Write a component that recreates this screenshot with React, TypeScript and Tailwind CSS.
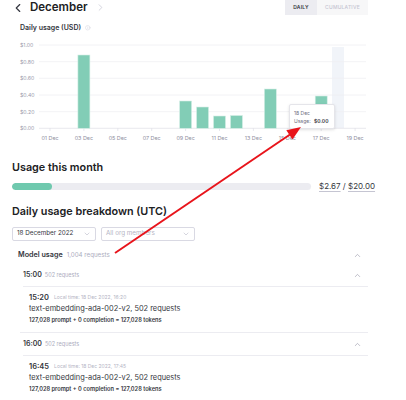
import React from "react";
import { ChevronLeft, ChevronRight, ChevronDown, ChevronUp, Info } from "lucide-react";

const OFF = 34;
const dayX = (d: number) => 50 + (d - 1) * 16.95;
const bars: [number, number][] = [
  [3, 55],
  [9, 101],
  [10, 107],
  [11, 116],
  [12, 115.5],
  [14, 89],
  [17, 96],
];
const gridY = [45, 61.7, 78.3, 95, 111.7, 128.3];
const yLabels = ["$1.00", "$0.80", "$0.60", "$0.40", "$0.20", "$0.00"];
const xLabels = [1, 3, 5, 7, 9, 11, 13, 15, 17, 19];

function Chart() {
  return (
    <svg width={406} height={112} className="block" style={{ fontFamily: "Inter, sans-serif" }}>
      <rect x={332} y={47 - OFF} width={12} height={128 - 47} fill="#f1f4f9" />
      {gridY.map((y, i) => (
        <line key={i} x1={39} x2={366} y1={y - OFF} y2={y - OFF} stroke={i === 5 ? "#e3e3ea" : "#efeff3"} strokeWidth={0.8} />
      ))}
      {yLabels.map((t, i) => (
        <text key={t} x={20} y={gridY[i] - OFF + 2} fontSize={5.2} fill="#9a9aab">
          {t}
        </text>
      ))}
      {xLabels.map((d) => (
        <g key={d}>
          <line x1={dayX(d)} x2={dayX(d)} y1={128.3 - OFF} y2={131 - OFF} stroke="#d9d9e3" strokeWidth={0.6} />
          <text x={dayX(d)} y={140 - OFF} fontSize={5.4} fill="#8e8ea0" textAnchor="middle">
            {String(d).padStart(2, "0")} Dec
          </text>
        </g>
      ))}
      {bars.map(([d, top]) => (
        <rect
          key={d}
          x={dayX(d) - 6}
          y={top - OFF}
          width={12}
          height={128.3 - top}
          fill="#82cdb6"
          stroke="#d6efe7"
          strokeWidth={0.6}
        />
      ))}
    </svg>
  );
}

function HourBlock({ hour, minute, local }: { hour: string; minute: string; local: string }) {
  return (
    <div className="flex flex-col">
      <div className="flex h-[12px] items-center pl-[23px] pr-[44px]">
        <span className="text-[7px] font-semibold text-[#353740]">{hour}</span>
        <span className="ml-[3px] text-[5.5px] text-[#acacbe]">502 requests</span>
        <ChevronUp className="ml-auto text-[#8e8ea0]" size={9} strokeWidth={1.5} />
      </div>
      <div className="ml-[23px] mr-[38px] mt-[5px] border-t border-[#ececf1]" />
      <div className="flex flex-col pl-[29px] pt-[6px]">
        <div className="flex h-[10px] items-center">
          <span className="text-[7.5px] font-semibold text-[#353740]">{minute}</span>
          <span className="ml-[5px] text-[5px] text-[#b4b4c4]">{local}</span>
        </div>
        <div className="mt-[1px] flex h-[10px] items-center text-[7.4px] text-[#353740]">
          text-embedding-ada-002-v2, 502 requests
        </div>
        <div className="mt-[2px] flex h-[8px] items-center text-[5.7px] font-semibold text-[#353740]">
          127,028 prompt + 0 completion = 127,028 tokens
        </div>
      </div>
    </div>
  );
}

export default function App() {
  return (
    <div
      className="relative h-[400px] w-[406px] overflow-hidden bg-white"
      style={{ fontFamily: "Inter, 'Noto Sans', sans-serif" }}
    >
      {/* Header */}
      <div className="flex h-[15px] items-center pr-[38px]">
        <ChevronLeft className="ml-[10.5px] text-[#353740]" size={14} strokeWidth={2} />
        <span className="ml-[5.5px] text-[11.5px] font-semibold leading-none text-[#202123]">December</span>
        <ChevronRight className="ml-[7px] text-[#c5c5d2]" size={11} strokeWidth={1.6} />
        <div className="ml-auto flex h-[15px] items-stretch bg-[#f7f7f8]">
          <div className="flex w-[32px] items-center justify-center bg-[#ececf1] text-[5px] font-semibold tracking-[0.04em] text-[#353740]">
            DAILY
          </div>
          <div className="flex w-[51px] items-center justify-center text-[5px] font-medium tracking-[0.04em] text-[#c5c5d2]">
            CUMULATIVE
          </div>
        </div>
      </div>

      {/* Daily usage title */}
      <div className="mt-[7px] flex h-[12px] items-center pl-[20px]">
        <span className="text-[7px] font-semibold text-[#353740]">Daily usage (USD)</span>
        <Info className="ml-[4px] text-[#c5c5d2]" size={5.5} strokeWidth={1.6} />
      </div>

      <Chart />

      {/* Usage this month */}
      <div className="mt-[14px] flex h-[16px] items-center pl-[12px]">
        <span className="text-[10.8px] font-semibold text-[#202123]">Usage this month</span>
      </div>
      <div className="mt-[5px] flex h-[10px] items-center pl-[12px]">
        <div className="h-[7px] w-[299px] shrink-0 overflow-hidden rounded-full bg-[#ececf1]">
          <div className="h-full w-[40px] rounded-full bg-[#6fc9ae]" />
        </div>
        <span className="ml-[8px] whitespace-nowrap text-[8px] text-[#353740]">
          <span className="underline decoration-[#c5c5d2] underline-offset-2">$2.67</span>
          {" / "}
          <span className="underline decoration-[#c5c5d2] underline-offset-2">$20.00</span>
        </span>
      </div>

      {/* Daily usage breakdown */}
      <div className="mt-[13px] flex h-[16px] items-center pl-[12px]">
        <span className="text-[10.8px] font-semibold text-[#202123]">Daily usage breakdown (UTC)</span>
      </div>
      <div className="mt-[7px] flex h-[14px] gap-[5px] pl-[12px]">
        <div className="flex w-[84px] items-center rounded-[2px] border border-[#d9d9e3] pl-[4px] pr-[4px]">
          <span className="text-[6.3px] text-[#353740]">18 December 2022</span>
          <ChevronDown className="ml-auto text-[#acacbe]" size={8} strokeWidth={1.5} />
        </div>
        <div className="flex w-[94px] items-center rounded-[2px] border border-[#d9d9e3] pl-[4px] pr-[4px]">
          <span className="text-[6.3px] text-[#b4b4c4]">All org members</span>
          <ChevronDown className="ml-auto text-[#acacbe]" size={8} strokeWidth={1.5} />
        </div>
      </div>

      {/* Model usage */}
      <div className="mt-[8px] flex h-[12px] items-center pl-[18px] pr-[44px]">
        <span className="text-[7.2px] font-semibold text-[#353740]">Model usage</span>
        <span className="ml-[4px] text-[6.2px] text-[#acacbe]">1,004 requests</span>
        <ChevronUp className="ml-auto text-[#8e8ea0]" size={9} strokeWidth={1.5} />
      </div>

      <div className="mt-[8px]">
        <HourBlock hour="15:00" minute="15:20" local="Local time: 18 Dec 2022, 16:20" />
      </div>
      <div className="ml-[20px] mr-[38px] mt-[8px] border-t border-[#ececf1]" />
      <div className="mt-[5px]">
        <HourBlock hour="16:00" minute="16:45" local="Local time: 18 Dec 2022, 17:45" />
      </div>

      {/* Tooltip */}
      <div className="absolute left-[289px] top-[104px] flex h-[25px] w-[46px] flex-col justify-center rounded-[2px] border border-[#e5e5ea] bg-white pl-[4px] shadow-[0_1px_3px_rgba(0,0,0,0.12)]">
        <span className="text-[5px] leading-[8px] text-[#6e6e80]">18 Dec</span>
        <span className="text-[5px] leading-[8px] text-[#6e6e80]">
          Usage: <span className="ml-[2px] font-semibold text-[#353740]">$0.00</span>
        </span>
      </div>

      {/* Red arrow annotation */}
      <svg className="pointer-events-none absolute left-0 top-0" width={406} height={400}>
        <line x1={115} y1={253} x2={290} y2={134.5} stroke="#e8141b" strokeWidth={2} />
        <polygon points="301,127 292.5,139.4 286.3,130.3" fill="#e8141b" />
      </svg>
    </div>
  );
}
